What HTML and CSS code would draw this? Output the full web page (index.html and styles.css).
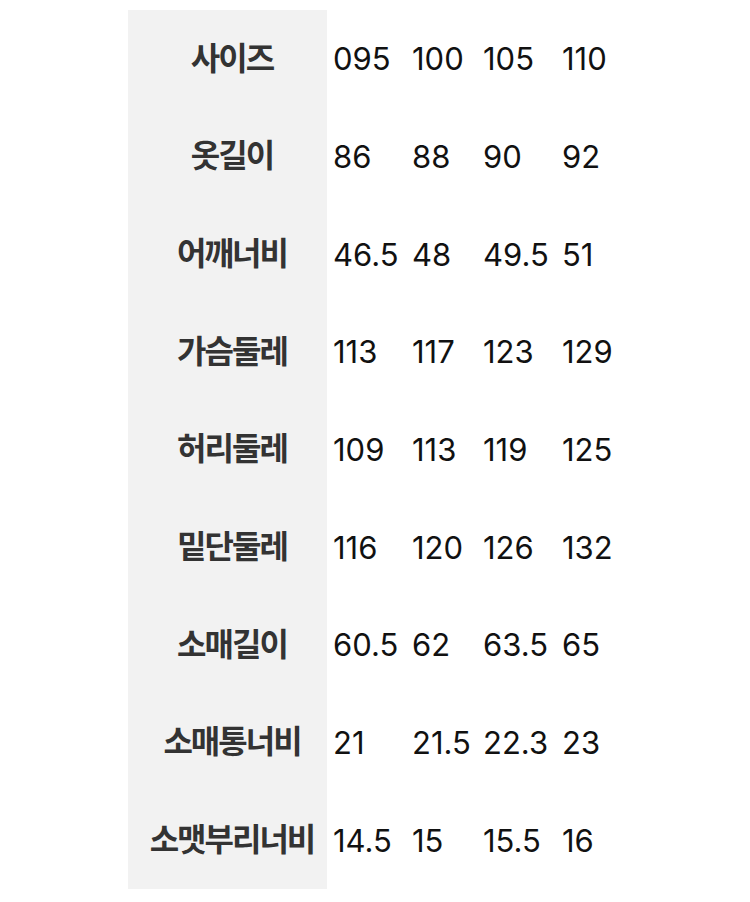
FILE: index.html
```html
<!DOCTYPE html>
<html lang="ko">
<head>
<meta charset="utf-8">
<title>사이즈표</title>
<link rel="stylesheet" href="styles.css">
</head>
<body>
<div class="size-table">
  <div class="row"><div class="head">사이즈</div><div class="val">095</div><div class="val">100</div><div class="val">105</div><div class="val">110</div></div>
  <div class="row"><div class="head">옷길이</div><div class="val">86</div><div class="val">88</div><div class="val">90</div><div class="val">92</div></div>
  <div class="row"><div class="head">어깨너비</div><div class="val">46.5</div><div class="val">48</div><div class="val">49.5</div><div class="val">51</div></div>
  <div class="row"><div class="head">가슴둘레</div><div class="val">113</div><div class="val">117</div><div class="val">123</div><div class="val">129</div></div>
  <div class="row"><div class="head">허리둘레</div><div class="val">109</div><div class="val">113</div><div class="val">119</div><div class="val">125</div></div>
  <div class="row"><div class="head">밑단둘레</div><div class="val">116</div><div class="val">120</div><div class="val">126</div><div class="val">132</div></div>
  <div class="row"><div class="head">소매길이</div><div class="val">60.5</div><div class="val">62</div><div class="val">63.5</div><div class="val">65</div></div>
  <div class="row"><div class="head">소매통너비</div><div class="val">21</div><div class="val">21.5</div><div class="val">22.3</div><div class="val">23</div></div>
  <div class="row"><div class="head">소맷부리너비</div><div class="val">14.5</div><div class="val">15</div><div class="val">15.5</div><div class="val">16</div></div>
</div>
</body>
</html>
```
FILE: styles.css
```css
html, body {
  margin: 0;
  padding: 0;
  background: #ffffff;
}

.size-table {
  margin: 10px 0 0 128px;
  display: flex;
  flex-direction: column;
}

.row {
  display: grid;
  grid-template-columns: 199px 79px 71px 79px 90px;
  height: 97.67px;
  align-items: stretch;
}

.head {
  background: #f2f2f2;
  display: flex;
  align-items: center;
  justify-content: center;
  padding-left: 9px;
  padding-bottom: 6px;
  font-family: "Noto Sans CJK KR", "Noto Sans", sans-serif;
  font-weight: 700;
  font-size: 32px;
  letter-spacing: -2px;
  color: #333333;
  white-space: nowrap;
}

.val {
  display: flex;
  align-items: center;
  padding-left: 6px;
  font-family: Inter, Roboto, "Liberation Sans", sans-serif;
  font-size: 31px;
  color: #111111;
  white-space: nowrap;
}
```
